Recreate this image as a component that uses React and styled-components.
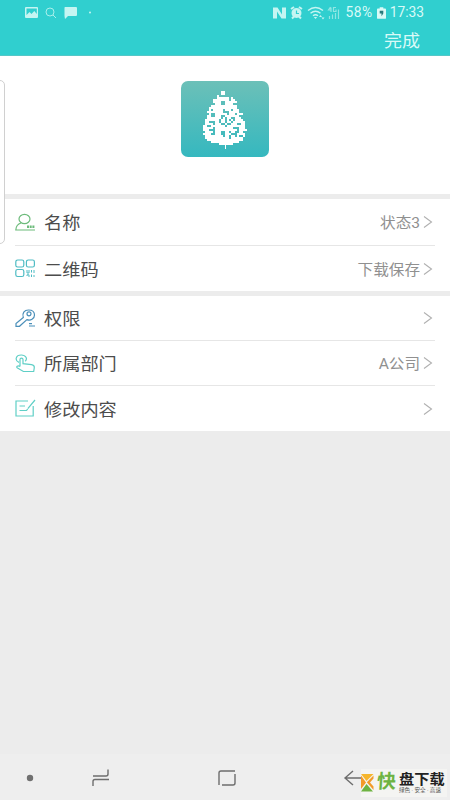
import React from 'react';
import styled, { createGlobalStyle } from 'styled-components';

const GlobalStyle = createGlobalStyle`
  * { box-sizing: border-box; }
  body {
    margin: 0;
    background: #ececec;
    font-family: Roboto, "Noto Sans CJK SC", sans-serif;
  }
`;

// one character per 2px cell of the leaf
const leaf = [
    '.........##...........',
    '.........##...........',
    '.......#..............',
    '.......######.#.......',
    '.....########.##......',
    '.....####..######.....',
    '......###..####.......',
    '....#############.....',
    '...##############.....',
    '...#.#####.###.###....',
    '..########...#####....',
    '...#..######.###.###..',
    '..##..###..#######....',
    '..#######.#.##..###...',
    '.#######.##.#.#.####..',
    '.##...##.##.##.######.',
    '.####.###..#..###..##.',
    '##..#######.#########.',
    '#####.#########...###.',
    '###...###########.####',
    '.####.###..##.##..##..',
    '####..###..###...####.',
    '.#########.##.##.#..#.',
    '.############.######..',
    '..##################..',
    '....##############....',
    '........#######.......',
];

const icons = {
    user: (
        <>
            <ellipse cx="9.5" cy="6" rx="5.5" ry="4.7" />
            <path d="M6 10C2.500 11 1 13 .8 17H20" />
            <path d="M12 13.700h7.500" strokeWidth="2.400" strokeDasharray="2 .7" />
        </>
    ),
    code: (
        <>
            <rect x=".8" y="1" width="8" height="7" rx="1.8" />
            <rect x="11.4" y="1" width="8" height="7" rx="1.8" />
            <rect x=".8" y="10.5" width="8" height="7" rx="1.8" />
            <path d="M12 11v3h2v-3M12 17v-1.200h2V18M16.500 11v2.500M16.500 15.500V18M19 11v3M19 16v2" strokeWidth="1" />
        </>
    ),
    key: (
        <>
            <path d="M8.300 8.500C6.800 4.400 9.300 1 13.500 1c3.700 0 6 2 6 5 0 3.800-4 6-7.600 4.600L4.500 17.300H1V14.500z" />
            <circle cx="14" cy="4.800" r="2" />
            <path d="M14 14.600h3M14 17h6" />
        </>
    ),
    touch: (
        <>
            <path d="M4 8.400C-.7 6.200.8 1 6.200 1c5 0 6.500 4 4 6.200" />
            <path d="M5 12.500V5.600c0-2 3-2 3 0v4l8.500 1.100c2 .3 3 1.200 2.800 3l-.6 3.800H8.400L2.500 14c-1.800-1.200.1-2.800 2.500-1.500" />
        </>
    ),
    edit: (
        <>
            <path d="M13 2H1v15h17.200V7" />
            <path d="M4.500 7H10M4.500 11.500h7l1.200-1.300M12.800 9.700 20 1" />
        </>
    ),
};

const Row = ({ icon, color, label, value, $height }) => (
    <Item $height={$height}>
        <RowIcon viewBox="0 0 21 19" $color={color}>{icons[icon]}</RowIcon>
        <Label>{label}</Label>
        <Value>{value}</Value>
        <Arrow viewBox="0 0 10 14"><path d="M1 1.500 8.500 7 1 12.500" /></Arrow>
    </Item>
);

const App = () => {
    return (
        <Screen>
            <GlobalStyle />
            <Header>
                <StatusBar>
                    <StatusIcons width="70" height="14" viewBox="0 0 70 14">
                        <path fillRule="evenodd" d="M1 1h11q1 0 1 1v9q0 1-1 1H1q-1 0-1-1V2q0-1 1-1zm.5 1.600V9l3-3 2 2 2.800-3 2.500 3V2.600z" />
                        <circle cx="25" cy="6" r="4" fill="none" stroke="#a9efeb" />
                        <path d="m28 9 3 3" stroke="#a9efeb" />
                        <path d="M40 1h11q1 0 1 1v7q0 1-1 1h-8l-3 3-.5-3V2q0-1 .5-1z" />
                        <circle cx="65" cy="6.500" r="1" />
                    </StatusIcons>
                    <StatusRight>
                        <StatusIcons width="69" height="14" viewBox="0 0 69 14">
                            <path d="M0 1.500h4.500l4.500 7V1.500h4V12.500H8.500L4 5.500v7H0z" />
                            <circle cx="23.500" cy="7" r="5" />
                            <path d="m18 3 3-2M29 3l-3-2M19 12.500l2-2M28 12.500l-2-2" stroke="#c5f5f2" strokeWidth="2" />
                            <path d="M23.500 4.500V7.500H26" fill="none" stroke="#30cfcf" strokeWidth="1.200" />
                            <path d="M35 4.500q7.500-6 15 0M37.500 7.200q5-4 10 0M40 9.700q2.500-2 5 0" fill="none" stroke="#c5f5f2" strokeWidth="1.400" />
                            <path d="m40.800 11 1.700 2 1.700-2zM46 11l1.500-2 1.500 2zM48.500 11.500l1.500 2 1.500-2z" />
                            <path d="M57.500 1 55.500 4h3M58 1.500V6M63 1.500h-2.500V5.500H63V3.500M56.500 10v3M59.500 8.500V13M62.500 7v6M65.500 3.500V13" fill="none" stroke="#8fe6e3" strokeWidth="1.200" />
                        </StatusIcons>
                        <StatusText $spacing="0.5px">58%</StatusText>
                        <Battery viewBox="0 0 10 13">
                            <path d="M3 0h4v1.500h2q1 0 1 1V12q0 1-1 1H1q-1 0-1-1V2.500q0-1 1-1h2z" />
                            <path d="M3 4h4v3L5 10V7H3z" fill="#287b7c" />
                        </Battery>
                        <StatusText>17:33</StatusText>
                    </StatusRight>
                </StatusBar>
                <Done>完成</Done>
            </Header>

            <Hero>
                <LeafBox>
                    <Leaf viewBox="0 0 44 58" shapeRendering="crispEdges">
                        {leaf.map((line, y) =>
                            [...line].map((c, x) =>
                                c === '#' ? <rect key={x + '-' + y} x={x * 2} y={y * 2} width="2" height="2" /> : null
                            )
                        )}
                        <rect x="22" y="53" width="1" height="5" />
                    </Leaf>
                </LeafBox>
            </Hero>

            <Group>
                <Row icon="user" color="#6dbb7b" label="名称" value="状态3" $height={47} />
                <Row icon="code" color="#4fbcc4" label="二维码" value="下载保存" $height={45} />
            </Group>
            <Group>
                <Row icon="key" color="#4b8fb9" label="权限" $height={45} />
                <Row icon="touch" color="#5fcfc6" label="所属部门" value="A公司" $height={45} />
                <Row icon="edit" color="#5fcfc6" label="修改内容" $height={45} />
            </Group>

            <EdgePanel />

            <NavBar>
                <NavIcon viewBox="0 0 450 46">
                    <circle cx="30" cy="24" r="3.200" fill="#707070" stroke="none" />
                    <path d="M93 32v-4.500q0-2 2-2h14M93 22h13q2 0 2-2V15.500" />
                    <path d="M235 17h-14q-2 0-2 2v12M222 31h11q2 0 2-2V20" />
                    <path d="M363 24h-17M353 17l-8 7 8 7" />
                </NavIcon>
                <Watermark>
                    <Logo viewBox="0 0 13 18">
                        <path d="M0 0h12.500L5.500 7z" fill="#f6b52c" />
                        <path d="M0 1.500v13.500l5-6.500z" fill="#f39a28" />
                        <path d="M5.800 8.300 12.500 1.500V4.500L9 8.500l3.500 4v3.500z" fill="#f39a28" />
                        <path d="m0 17.500 5.500-7.500 6.500 7.500z" fill="#6eb342" />
                    </Logo>
                    <Quick>快</Quick>
                    <Names>
                        <Brand>盘下载</Brand>
                        <Slogan>绿色 · 安全 · 高速</Slogan>
                    </Names>
                </Watermark>
            </NavBar>
        </Screen>
    );
};

export default App;

const Screen = styled.div`
    position: relative;
    display: flex;
    flex-direction: column;
    width: 450px;
    height: 800px;
    overflow: hidden;
    background: #ececec;
`;

const Header = styled.header`
    height: 56px;
    background: #30cfcf;
    border-bottom: 1px solid #55c7c7;
    color: #d9faf7;
`;

const StatusBar = styled.div`
    display: flex;
    justify-content: space-between;
    align-items: center;
    height: 25px;
    padding: 0 26px 0 25px;
`;

const StatusIcons = styled.svg`
    fill: #c5f5f2;
`;

const StatusRight = styled.div`
    display: flex;
    align-items: center;
    gap: 4px;
`;

const StatusText = styled.span`
    font-size: 13.8px;
    line-height: 25px;
    letter-spacing: ${(props) => props.$spacing || 'normal'};
`;

const Battery = styled.svg`
    width: 9px;
    height: 12px;
    fill: #d9faf7;
`;

const Done = styled.div`
    padding: 1px 30px 0 0;
    text-align: right;
    font-size: 18px;
    line-height: 30px;
    transform: scaleY(0.94);
`;

const Hero = styled.div`
    display: flex;
    justify-content: center;
    height: 138px;
    padding-top: 25px;
    background: #fff;
`;

const LeafBox = styled.div`
    display: flex;
    justify-content: center;
    width: 88px;
    height: 76px;
    padding-top: 10px;
    border-radius: 7px;
    background: linear-gradient(#6cc0b8, #35b8bf);
`;

const Leaf = styled.svg`
    width: 44px;
    height: 58px;
    fill: #fff;
`;

const Group = styled.div`
    margin-top: 5px;
    background: #fff;
`;

const Item = styled.div`
    display: flex;
    align-items: center;
    height: ${(props) => props.$height}px;
    margin: 0 15px;
    padding-right: 2px;

    &:not(:last-child) {
        border-bottom: 1px solid #e6e6e6;
    }
`;

const RowIcon = styled.svg`
    width: 21px;
    height: 19px;
    margin-right: 8px;
    fill: none;
    stroke: ${(props) => props.$color};
    stroke-width: 1.2;
`;

const Label = styled.span`
    flex: 1;
    color: #4c4c4c;
    font-size: 18.2px;
    transform: scaleY(0.91);
`;

const Value = styled.span`
    margin-right: 3px;
    color: #909090;
    font-size: 15.6px;
    transform: scaleY(0.92);
`;

const Arrow = styled.svg`
    width: 10px;
    height: 14px;
    fill: none;
    stroke: #b0b0b0;
    stroke-width: 1.1;
`;

/* handle of the side panel, half off the screen */
const EdgePanel = styled.div`
    position: absolute;
    left: -10px;
    top: 80px;
    width: 15px;
    height: 164px;
    border: 1px solid #d0d0d0;
    border-radius: 5px;
    background: #fff;
`;

const NavBar = styled.nav`
    position: relative;
    height: 46px;
    margin-top: auto;
    background: #eee;
`;

const NavIcon = styled.svg`
    display: block;
    width: 450px;
    height: 46px;
    fill: none;
    stroke: #6e6e6e;
    stroke-width: 1.4;
`;

/* sits over the navigation icons */
const Watermark = styled.div`
    position: absolute;
    left: 361px;
    top: 15px;
    display: flex;
    align-items: center;
    width: 86px;
    height: 28px;
    background: #f4f4f2;
`;

const Logo = styled.svg`
    width: 13px;
    height: 18px;
`;

const Quick = styled.span`
    margin-left: 3px;
    color: #6eb342;
    font-size: 19px;
    font-weight: 700;
    line-height: 24px;
    transform: translateY(-1px) skewX(-4deg);
`;

const Names = styled.div`
    display: flex;
    flex-direction: column;
    margin-left: 3px;
    white-space: nowrap;
`;

const Brand = styled.span`
    color: #222;
    font-size: 15.2px;
    font-weight: 700;
    line-height: 14px;
    transform: scaleY(0.9);
`;

const Slogan = styled.span`
    color: #555;
    font-size: 5.6px;
    line-height: 9px;
`;
